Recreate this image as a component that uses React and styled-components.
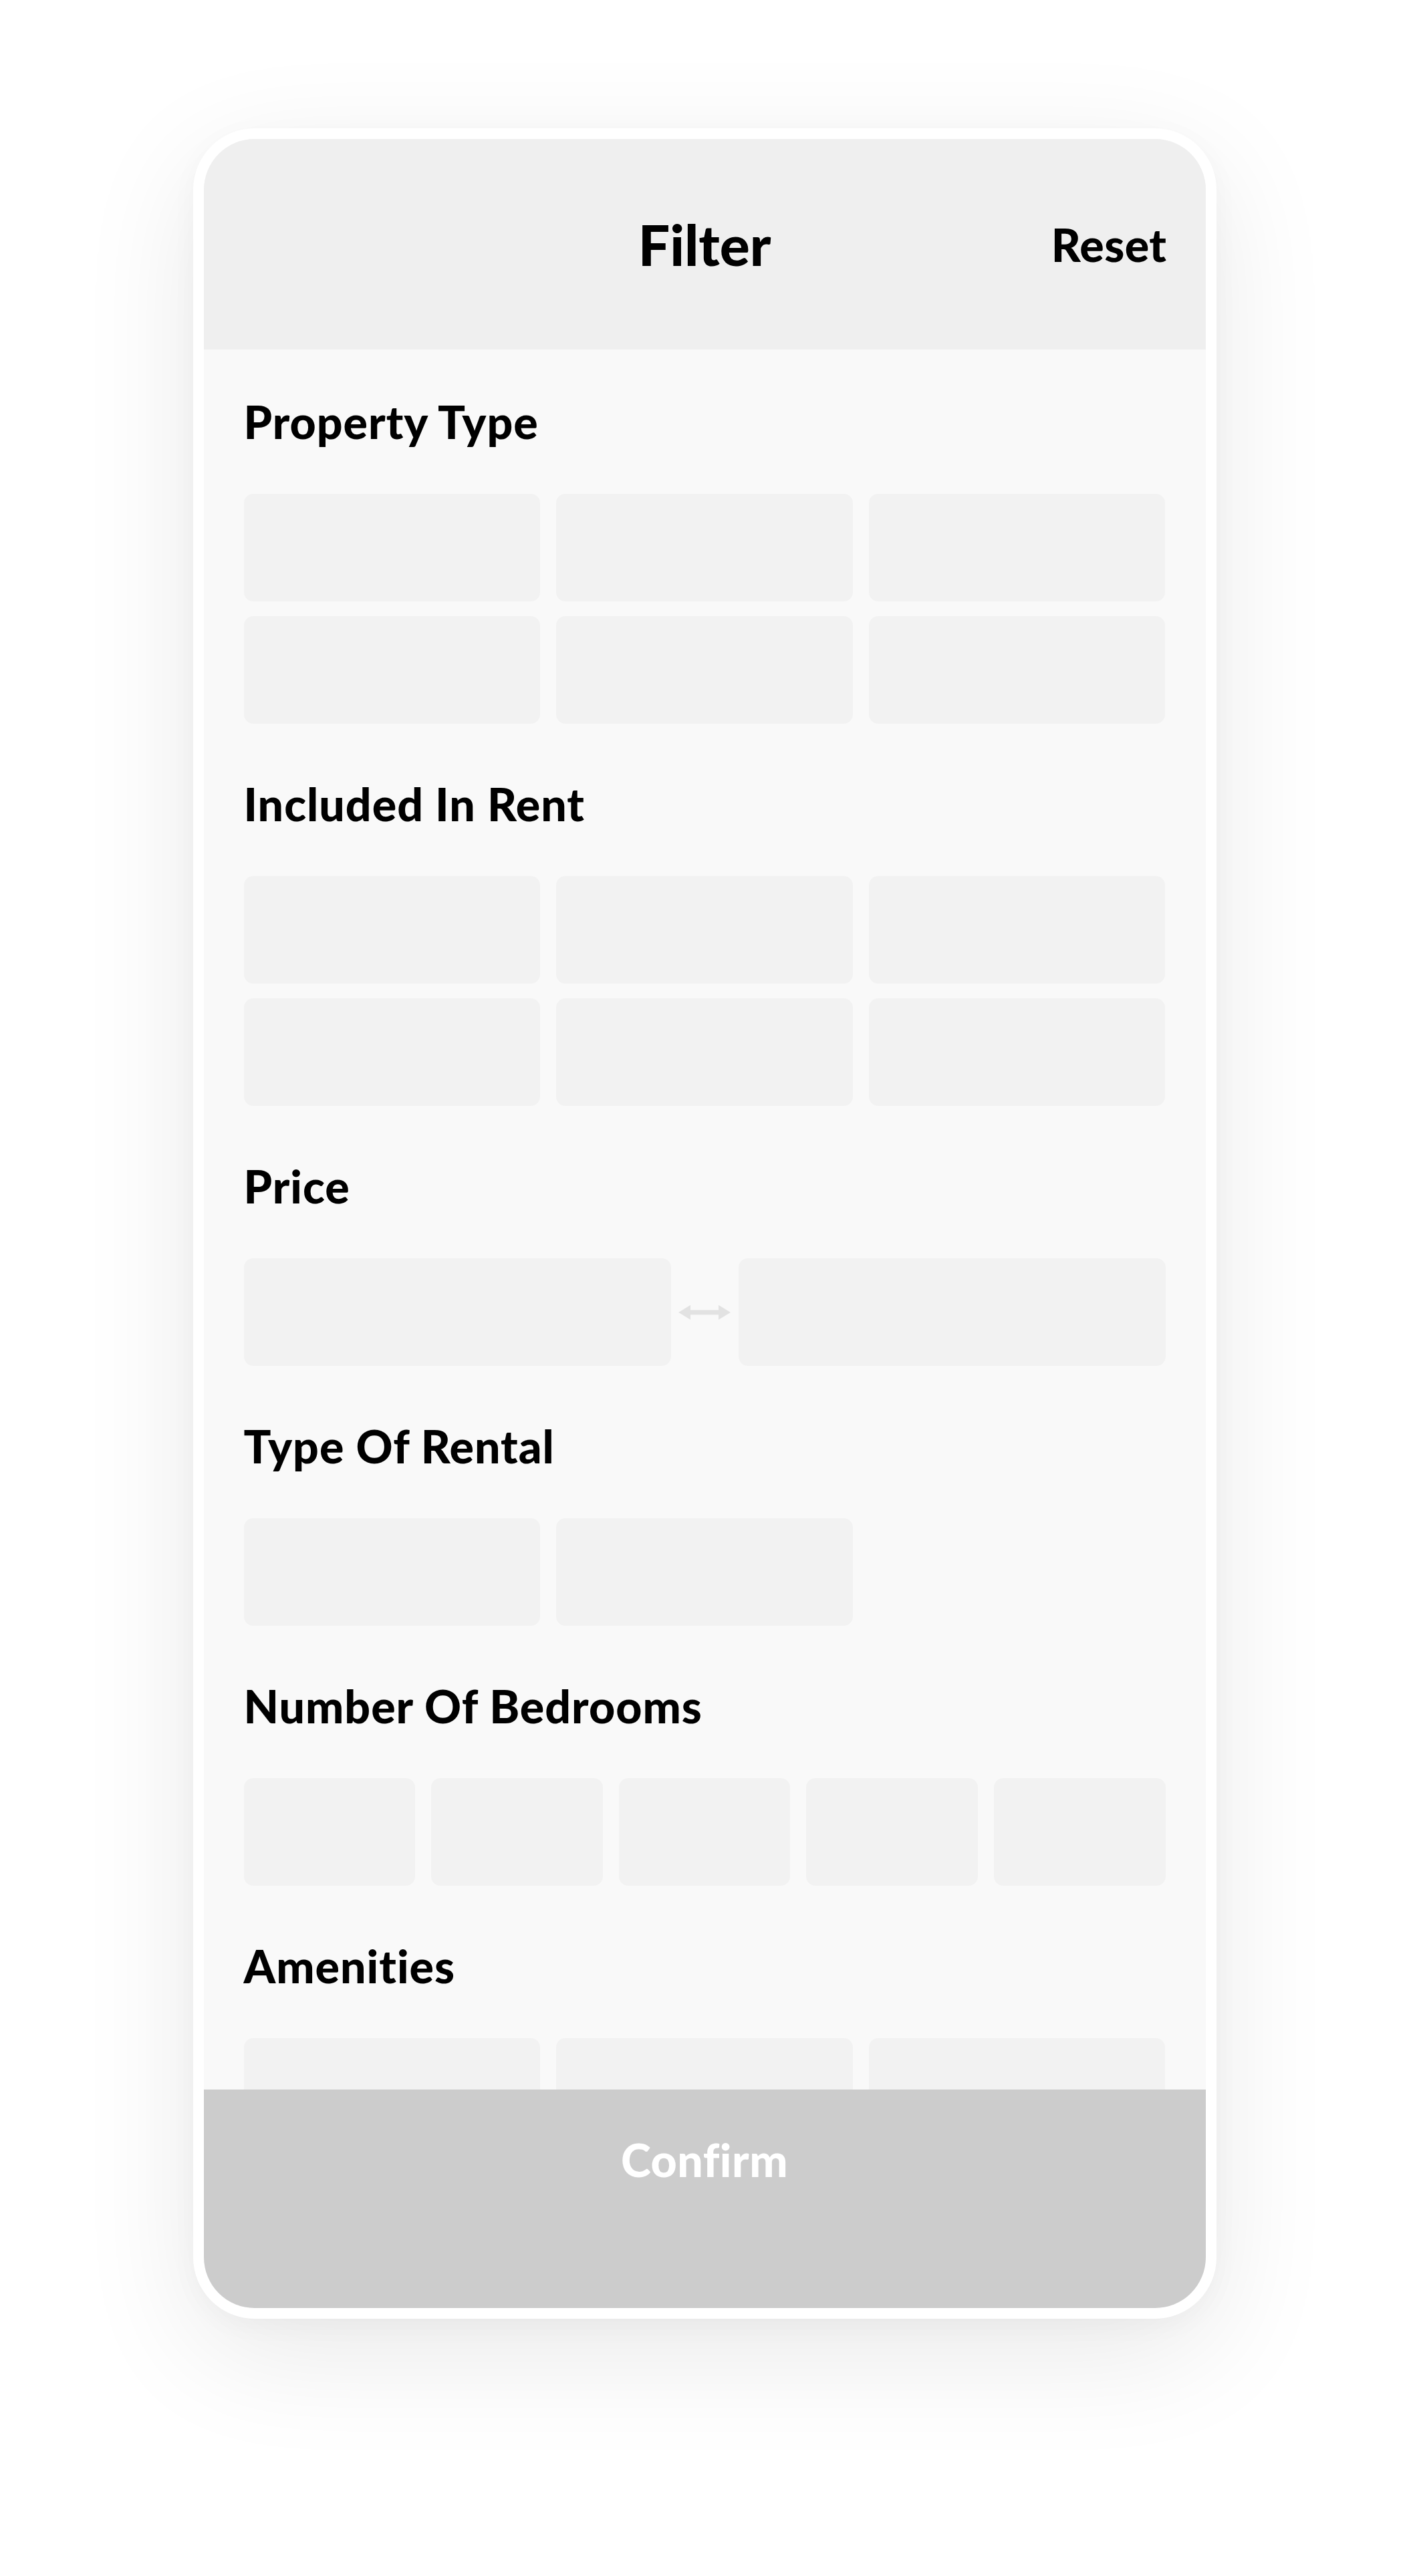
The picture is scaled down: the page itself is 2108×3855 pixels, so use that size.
import styled, { createGlobalStyle } from "styled-components"

const GlobalStyle = createGlobalStyle`
  html, body {
    margin: 0;
    padding: 0;
    background: #ffffff;
  }
  body {
    font-family: Lato, "Open Sans", "Liberation Sans", sans-serif;
    -webkit-font-smoothing: antialiased;
  }
`

const Page = styled.div`
  width: 2108px;
  height: 3855px;
  display: flex;
  justify-content: center;
  align-items: flex-start;
  padding-top: 192px;
  box-sizing: border-box;
  background: #ffffff;
  overflow: hidden;
`

const Phone = styled.div`
  width: 1531px;
  padding: 16px;
  box-sizing: border-box;
  background: #ffffff;
  border-radius: 92px;
  box-shadow: 0 50px 180px rgba(0, 0, 0, 0.09), 0 10px 40px rgba(0, 0, 0, 0.03);
`

const Screen = styled.div`
  height: 3246px;
  border-radius: 76px;
  overflow: hidden;
  display: flex;
  flex-direction: column;
  background: #f9f9f9;
`

const Header = styled.header`
  flex: 0 0 315px;
  background: #efefef;
  display: grid;
  grid-template-columns: 1fr auto 1fr;
  align-items: center;
  padding: 0 58px;
`

const Title = styled.h1`
  grid-column: 2;
  margin: 0;
  font-size: 84px;
  line-height: 1;
  font-weight: 900;
  color: #000;
`

const ResetButton = styled.button`
  grid-column: 3;
  justify-self: end;
  border: none;
  background: none;
  padding: 0;
  font-family: inherit;
  font-size: 68px;
  line-height: 1;
  font-weight: 900;
  letter-spacing: 0.5px;
  color: #000;
  cursor: pointer;
`

const Body = styled.main`
  flex: 1;
  overflow: hidden;
  padding: 74px 60px 0;
`

const Section = styled.section`
  margin-bottom: 86px;
`

const SectionTitle = styled.h2`
  margin: 0 0 74px;
  font-size: 68px;
  line-height: 1;
  font-weight: 900;
  color: #000;
  letter-spacing: 1px;
`

const TileGrid = styled.div`
  display: grid;
  grid-template-columns: repeat(${(p) => p.$cols}, 1fr);
  column-gap: 24px;
  row-gap: 22px;
`

const Tile = styled.div`
  height: 161px;
  border-radius: 14px;
  background: #f2f2f2;
`

const PriceRow = styled.div`
  display: grid;
  grid-template-columns: 1fr 101px 1fr;
  align-items: center;
`

const ArrowBox = styled.div`
  display: flex;
  justify-content: center;
  align-items: center;
`

const Footer = styled.footer`
  flex: 0 0 327px;
  background: #cccccc;
  display: flex;
  justify-content: center;
  align-items: flex-start;
  padding-top: 71px;
  box-sizing: border-box;
`

const ConfirmButton = styled.button`
  border: none;
  background: none;
  padding: 0;
  font-family: inherit;
  font-size: 68px;
  line-height: 1;
  font-weight: 900;
  letter-spacing: 0.5px;
  color: #ffffff;
`

const DoubleArrow = () => (
  <svg width="78" height="24" viewBox="0 0 78 24">
    <line x1="14" y1="12" x2="64" y2="12" stroke="#e2e2e2" strokeWidth="7" />
    <polygon points="0,12 18,1 18,23" fill="#e2e2e2" />
    <polygon points="78,12 60,1 60,23" fill="#e2e2e2" />
  </svg>
)

const tiles = (n) => Array.from({ length: n }, (_, i) => <Tile key={i} />)

const sections = [
  { title: "Property Type", cols: 3, count: 6 },
  { title: "Included In Rent", cols: 3, count: 6 },
  { title: "Price", price: true },
  { title: "Type Of Rental", cols: 3, count: 2 },
  { title: "Number Of Bedrooms", cols: 5, count: 5 },
  { title: "Amenities", cols: 3, count: 6 },
]

export default function App() {
  return (
    <>
      <GlobalStyle />
      <Page>
        <Phone>
          <Screen>
            <Header>
              <Title>Filter</Title>
              <ResetButton>Reset</ResetButton>
            </Header>
            <Body>
              {sections.map((s) => (
                <Section key={s.title}>
                  <SectionTitle>{s.title}</SectionTitle>
                  {s.price ? (
                    <PriceRow>
                      <Tile />
                      <ArrowBox>
                        <DoubleArrow />
                      </ArrowBox>
                      <Tile />
                    </PriceRow>
                  ) : (
                    <TileGrid $cols={s.cols}>{tiles(s.count)}</TileGrid>
                  )}
                </Section>
              ))}
            </Body>
            <Footer>
              <ConfirmButton>Confirm</ConfirmButton>
            </Footer>
          </Screen>
        </Phone>
      </Page>
    </>
  )
}
